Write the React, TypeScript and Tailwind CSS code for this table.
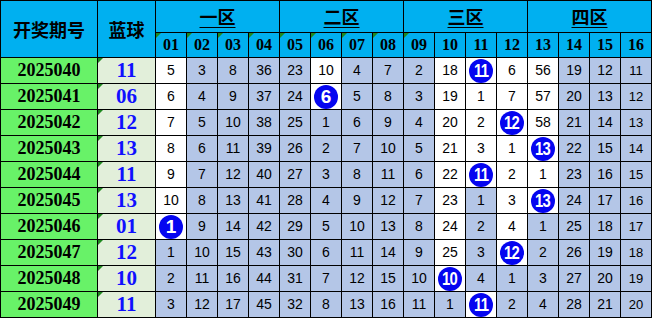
import React from "react";

type Cell = [string, number];

// w = white, b = blue-grey, o = drawn ball
const rows: { period: string; blue: string; cells: Cell[] }[] = [
  { period: "2025040", blue: "11", cells: [["w",5],["b",3],["b",8],["b",36],["b",23],["w",10],["b",4],["b",7],["b",2],["w",18],["o",11],["w",6],["w",56],["b",19],["b",12],["b",11]] },
  { period: "2025041", blue: "06", cells: [["w",6],["b",4],["b",9],["b",37],["b",24],["o",6],["b",5],["b",8],["b",3],["w",19],["w",1],["w",7],["w",57],["b",20],["b",13],["b",12]] },
  { period: "2025042", blue: "12", cells: [["w",7],["b",5],["b",10],["b",38],["b",25],["b",1],["b",6],["b",9],["b",4],["w",20],["w",2],["o",12],["w",58],["b",21],["b",14],["b",13]] },
  { period: "2025043", blue: "13", cells: [["w",8],["b",6],["b",11],["b",39],["b",26],["b",2],["b",7],["b",10],["b",5],["w",21],["w",3],["w",1],["o",13],["b",22],["b",15],["b",14]] },
  { period: "2025044", blue: "11", cells: [["w",9],["b",7],["b",12],["b",40],["b",27],["b",3],["b",8],["b",11],["b",6],["w",22],["o",11],["w",2],["w",1],["b",23],["b",16],["b",15]] },
  { period: "2025045", blue: "13", cells: [["w",10],["b",8],["b",13],["b",41],["b",28],["b",4],["b",9],["b",12],["b",7],["w",23],["b",1],["w",3],["o",13],["b",24],["b",17],["b",16]] },
  { period: "2025046", blue: "01", cells: [["o",1],["b",9],["b",14],["b",42],["b",29],["b",5],["b",10],["b",13],["b",8],["w",24],["b",2],["w",4],["b",1],["b",25],["b",18],["b",17]] },
  { period: "2025047", blue: "12", cells: [["b",1],["b",10],["b",15],["b",43],["b",30],["b",6],["b",11],["b",14],["b",9],["w",25],["b",3],["o",12],["b",2],["b",26],["b",19],["b",18]] },
  { period: "2025048", blue: "10", cells: [["b",2],["b",11],["b",16],["b",44],["b",31],["b",7],["b",12],["b",15],["b",10],["o",10],["b",4],["b",1],["b",3],["b",27],["b",20],["b",19]] },
  { period: "2025049", blue: "11", cells: [["b",3],["b",12],["b",17],["b",45],["b",32],["b",8],["b",13],["b",16],["b",11],["b",1],["o",11],["b",2],["b",4],["b",28],["b",21],["b",20]] },
];

const zones = ["一区", "二区", "三区", "四区"];
const nums = Array.from({ length: 16 }, (_, i) => String(i + 1).padStart(2, "0"));

function Tick() {
  return (
    <span className="absolute left-0 top-0 h-0 w-0 border-t-[5px] border-r-[5px] border-t-[#1f8a1f] border-r-transparent" />
  );
}

function Ball({ n }: { n: number }) {
  return (
    <span className="flex h-[24px] w-[24px] items-center justify-center rounded-full bg-[#0505f0] font-['Liberation_Sans',Arial,sans-serif] text-[19px] font-bold leading-none text-white">
      <span className={n > 9 ? "inline-block scale-x-[0.78] tracking-[-1px]" : "inline-block"}>{n}</span>
    </span>
  );
}

export default function App() {
  return (
    <div className="grid w-fit grid-cols-[96px_57px_repeat(16,30px)] grid-rows-[31px_24px_repeat(10,25px)] gap-px bg-black p-px">
      <div className="row-span-2 flex items-center justify-center bg-[#00b0f0] font-['Noto_Sans_CJK_SC',sans-serif] text-[18px] font-bold text-black">
        开奖期号
      </div>
      <div className="row-span-2 flex items-center justify-center bg-[#00b0f0] font-['Noto_Sans_CJK_SC',sans-serif] text-[18px] font-bold text-black">
        蓝球
      </div>
      {zones.map((z) => (
        <div key={z} className="col-span-4 flex items-center justify-center bg-[#00b0f0] font-['Noto_Sans_CJK_SC',sans-serif] text-[18px] font-bold text-black">
          <span className="underline decoration-1 underline-offset-[3px]">{z}</span>
        </div>
      ))}
      {nums.map((n, i) => (
        <div key={n} className="relative flex items-center justify-center bg-[#00b0f0] font-['Liberation_Serif',serif] text-[16px] font-bold text-black">
          {i < 9 && <Tick />}
          {n}
        </div>
      ))}
      {rows.map((r) => (
        <React.Fragment key={r.period}>
          <div className="flex items-center justify-center bg-[#68f268] font-['Liberation_Serif',serif] text-[18px] font-bold text-black">
            {r.period}
          </div>
          <div className="relative flex items-center justify-center bg-[#e2efda] font-['Liberation_Serif',serif] text-[21px] font-bold text-[#1010ff]">
            <Tick />
            {r.blue}
          </div>
          {r.cells.map(([t, v], i) => (
            <div
              key={i}
              className={`flex items-center justify-center font-['Liberation_Sans',Arial,sans-serif] text-black ${i === 15 ? "text-[13px]" : "text-[14px]"} ${t === "b" ? "bg-[#b4c6e7]" : "bg-white"}`}
            >
              {t === "o" ? <Ball n={v} /> : v}
            </div>
          ))}
        </React.Fragment>
      ))}
    </div>
  );
}
